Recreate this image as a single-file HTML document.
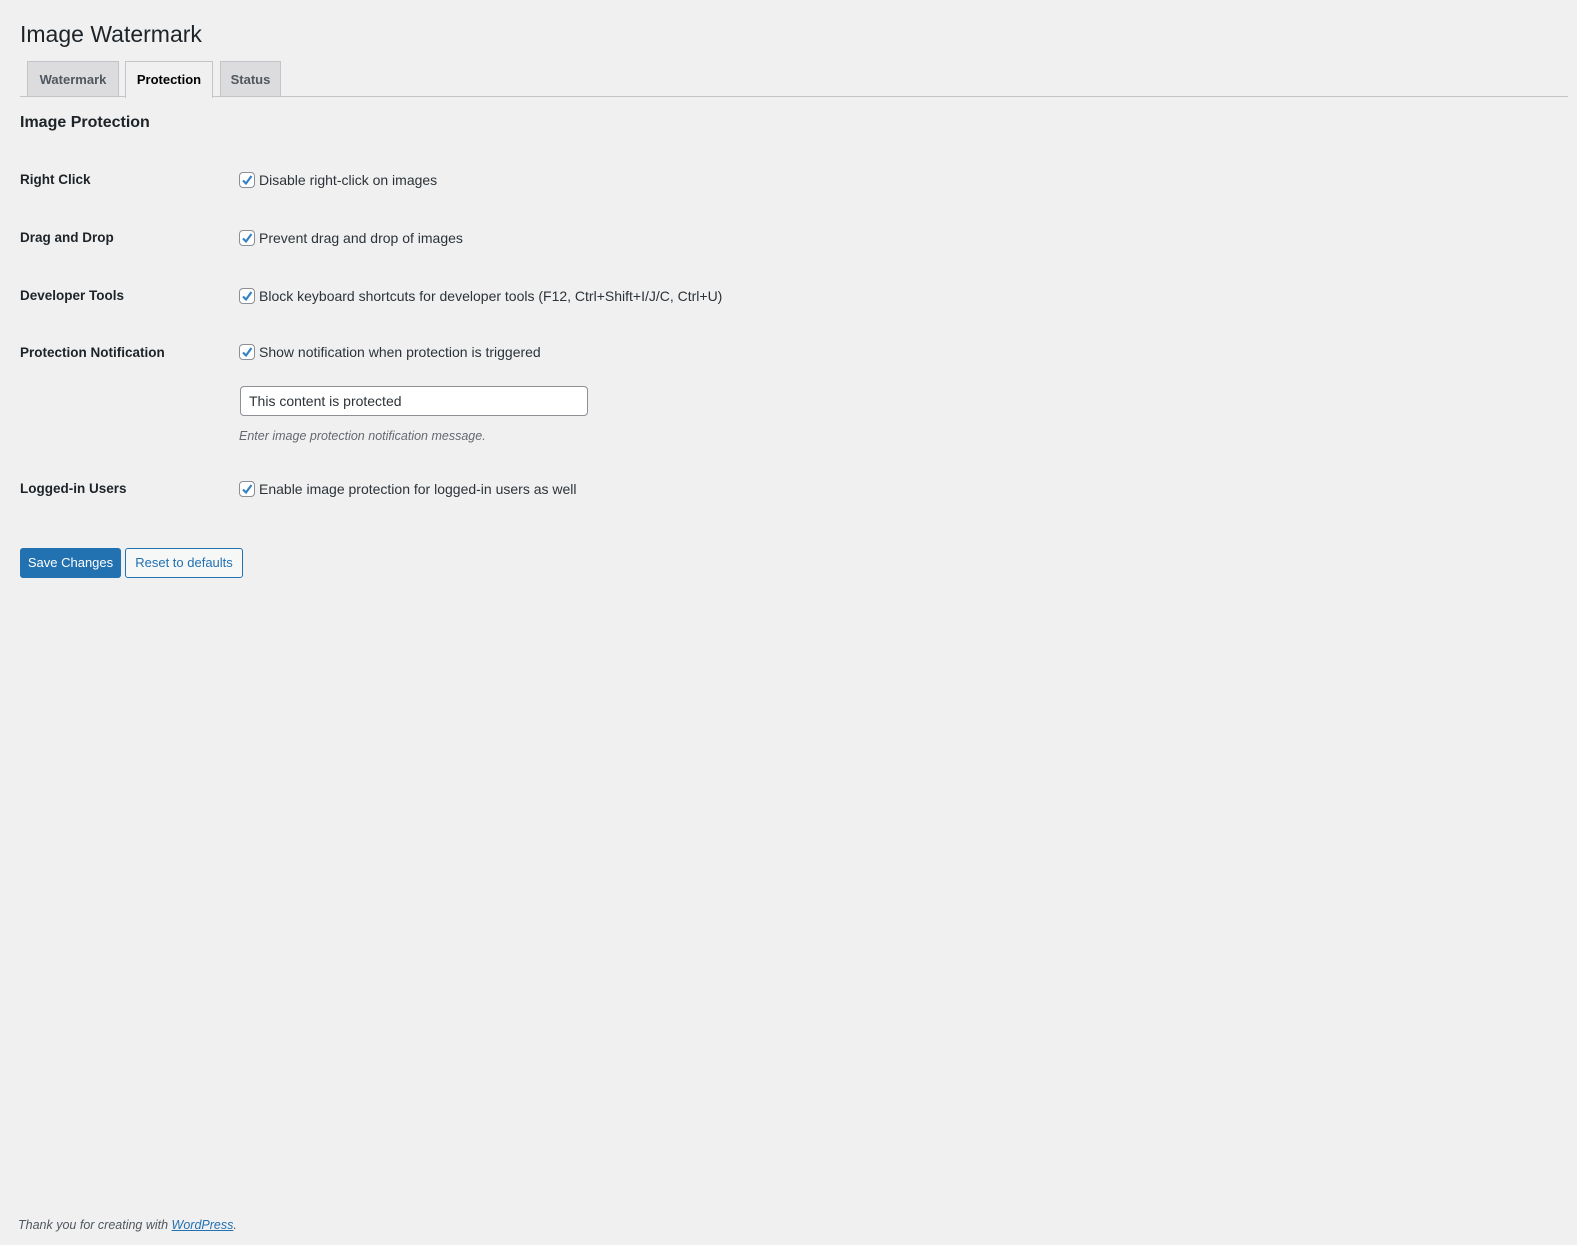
<!DOCTYPE html>
<html><head><meta charset="utf-8"><style>
html,body{margin:0;padding:0;background:#f0f0f1;width:1577px;height:1245px;overflow:hidden;font-family:"Liberation Sans",sans-serif;color:#1d2327;font-size:13px}
.a{position:absolute;white-space:nowrap}
h1{position:absolute;left:20px;top:19px;margin:0;font-size:23px;font-weight:400;line-height:30px}
.line{position:absolute;left:20px;top:96px;width:1548px;height:1px;background:#c3c4c7}
.tab{position:absolute;top:61px;height:35px;border:1px solid #c3c4c7;border-bottom:none;background:#dcdcde;font-weight:700;font-size:13px;color:#50575e;line-height:35px;text-align:center;box-sizing:border-box}
.tab.on{background:#f0f0f1;color:#000;height:37px}
h2{position:absolute;left:20px;top:114px;margin:0;font-size:16px;font-weight:700}
.lbl{position:absolute;left:20px;font-weight:700;font-size:13.5px}
.cb{position:absolute;left:239px;width:16px;height:16px;border:1px solid #8c8f94;border-radius:4px;background:#fff;box-sizing:border-box}
.cb svg{position:absolute;left:1px;top:1px}
.txt{position:absolute;left:259px;font-size:14px;color:#2c3338}
</style></head><body>
<h1>Image Watermark</h1>
<div class="line"></div>
<div class="tab" style="left:27px;width:92px">Watermark</div>
<div class="tab on" style="left:125px;width:88px">Protection</div>
<div class="tab" style="left:220px;width:61px">Status</div>
<h2>Image Protection</h2>

<div class="lbl a" style="top:172px">Right Click</div>
<div class="cb" style="top:172px"><svg width="12" height="12" viewBox="0 0 12 12"><path d="M2 6.5 L5 9.5 L10.5 2" fill="none" stroke="#3582c4" stroke-width="2.2"/></svg></div>
<div class="txt a" style="top:172px">Disable right-click on images</div>

<div class="lbl a" style="top:230px">Drag and Drop</div>
<div class="cb" style="top:230px"><svg width="12" height="12" viewBox="0 0 12 12"><path d="M2 6.5 L5 9.5 L10.5 2" fill="none" stroke="#3582c4" stroke-width="2.2"/></svg></div>
<div class="txt a" style="top:230px">Prevent drag and drop of images</div>

<div class="lbl a" style="top:288px">Developer Tools</div>
<div class="cb" style="top:288px"><svg width="12" height="12" viewBox="0 0 12 12"><path d="M2 6.5 L5 9.5 L10.5 2" fill="none" stroke="#3582c4" stroke-width="2.2"/></svg></div>
<div class="txt a" style="top:288px">Block keyboard shortcuts for developer tools (F12, Ctrl+Shift+I/J/C, Ctrl+U)</div>

<div class="lbl a" style="top:345px">Protection Notification</div>
<div class="cb" style="top:344px"><svg width="12" height="12" viewBox="0 0 12 12"><path d="M2 6.5 L5 9.5 L10.5 2" fill="none" stroke="#3582c4" stroke-width="2.2"/></svg></div>
<div class="txt a" style="top:344px">Show notification when protection is triggered</div>

<div class="a" style="left:240px;top:386px;width:348px;height:30px;box-sizing:border-box;border:1px solid #8c8f94;border-radius:4px;background:#fff;padding:0 8px;line-height:28px;font-size:14px;color:#2c3338">This content is protected</div>
<div class="a" style="left:239px;top:429px;font-style:italic;font-size:12.5px;color:#646970">Enter image protection notification message.</div>

<div class="lbl a" style="top:481px">Logged-in Users</div>
<div class="cb" style="top:481px"><svg width="12" height="12" viewBox="0 0 12 12"><path d="M2 6.5 L5 9.5 L10.5 2" fill="none" stroke="#3582c4" stroke-width="2.2"/></svg></div>
<div class="txt a" style="top:481px">Enable image protection for logged-in users as well</div>

<div class="a" style="left:20px;top:548px;width:101px;height:30px;background:#2271b1;border-radius:3px;color:#fff;line-height:30px;text-align:center;font-size:13px">Save Changes</div>
<div class="a" style="left:125px;top:548px;width:118px;height:30px;box-sizing:border-box;border:1px solid #2271b1;background:#f6f7f7;border-radius:3px;color:#2271b1;line-height:28px;text-align:center;font-size:13px">Reset to defaults</div>

<div class="a" style="left:18px;top:1218px;font-style:italic;font-size:12.5px;color:#50575e">Thank you for creating with <span style="color:#2271b1;text-decoration:underline">WordPress</span>.</div>
</body></html>
